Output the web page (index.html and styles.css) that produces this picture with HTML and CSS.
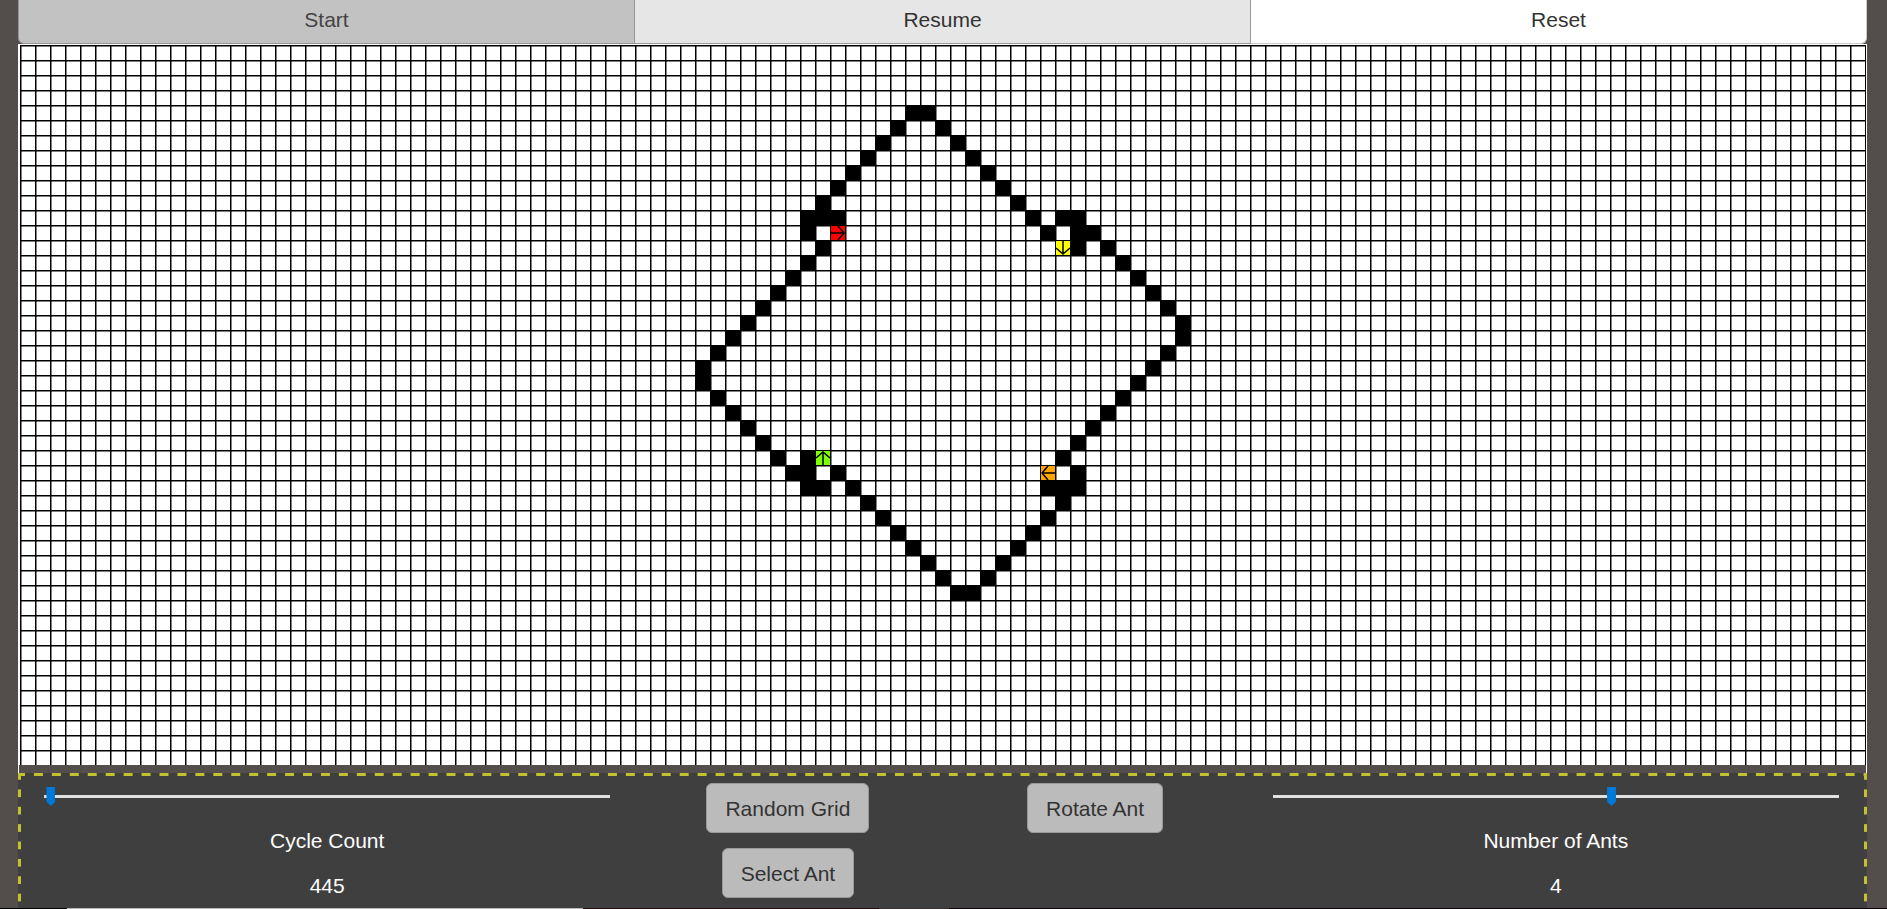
FILE: index.html
```html
<!DOCTYPE html>
<html lang="en">
<head>
<meta charset="utf-8">
<title>Langton's Ant</title>
<link rel="stylesheet" href="styles.css">
</head>
<body>
<main class="app">
  <div class="toolbar">
    <button class="tool tool-start" type="button">Start</button>
    <button class="tool tool-resume" type="button">Resume</button>
    <button class="tool tool-reset" type="button">Reset</button>
  </div>
  <div class="board">
    <canvas class="grid" id="grid" role="img" aria-label="Ant grid"></canvas>
  </div>
  <section class="panel">
    <div class="control">
      <input class="slider" id="cycles" type="range" min="0" max="100000" value="445">
      <label class="caption" for="cycles">Cycle Count</label>
      <output class="value" for="cycles">445</output>
    </div>
    <div class="actions">
      <button class="btn" type="button">Random Grid</button>
      <button class="btn" type="button">Select Ant</button>
    </div>
    <div class="actions">
      <button class="btn" type="button">Rotate Ant</button>
    </div>
    <div class="control">
      <input class="slider" id="ants" type="range" min="1" max="6" value="4">
      <label class="caption" for="ants">Number of Ants</label>
      <output class="value" for="ants">4</output>
    </div>
  </section>
</main>
<div class="edge"></div>
<script src="grid.js"></script>
</body>
</html>
```
FILE: styles.css
```css
* { box-sizing: border-box; }

body {
  margin: 0;
  height: 100vh;
  overflow: hidden;
  background: #534e4c;
  color: #fff;
  font: 21px/31px "Liberation Sans", Arial, sans-serif;
}

.app { margin: 0 20px 0 18px; }

.toolbar { display: flex; }

.tool {
  flex: 1;
  height: 44px;
  margin: 0;
  padding: 0 18px 4px;
  border: 1px solid #adadad;
  border-width: 0 1px 1px 0;
  color: #333;
  font: inherit;
}

.tool-start {
  background: #c2c2c2;
  border-color: #959595;
  border-left-width: 1px;
  border-bottom-left-radius: 6px;
  color: #444;
}

.tool-resume { background: #e6e6e6; border-color: #999; }

.tool-reset {
  background: #fff;
  border-color: #ccc;
  border-bottom-right-radius: 6px;
}

.board {
  padding-bottom: 8px;
  border: 1px solid #fff;
  border-bottom: 0;
}

.grid {
  display: block;
  width: 100%;
  height: 720px;
  background: #fff;
}

.panel {
  display: grid;
  grid-template-columns: 2fr 1fr 1fr 2fr;
  height: 139px;
  padding: 10px 4px 0 2px;
  background:
    linear-gradient(90deg, #c2c230 7px, transparent 7px 16px, #c2c230 16px) left top / 18px 3px round no-repeat,
    linear-gradient(#c2c230 7px, transparent 7px 16px, #c2c230 16px) left top / 3px 17px no-repeat round,
    linear-gradient(#c2c230 7px, transparent 7px 16px, #c2c230 16px) right top / 3px 17px no-repeat round,
    #3f3f3f;
}

.control {
  display: flex;
  flex-direction: column;
  align-items: center;
  gap: 14px;
  padding: 4px 24px 0;
}

.actions {
  display: flex;
  flex-direction: column;
  align-items: center;
  gap: 15px;
}

.btn {
  height: 50px;
  padding: 0 18px;
  border: 1px solid #999;
  border-radius: 6px;
  background: #bbb;
  color: #333;
  font: inherit;
}

.slider {
  appearance: none;
  width: 100%;
  height: 19px;
  margin: 0 0 5px;
  background: linear-gradient(#e0e0e0, #e0e0e0) center / 100% 3px no-repeat;
}

.slider::-webkit-slider-thumb {
  appearance: none;
  width: 9px;
  height: 19px;
  background: #0078d7;
  clip-path: polygon(0 0, 100% 0, 100% 78%, 50% 100%, 0 78%);
}

.edge {
  position: fixed;
  right: 0;
  bottom: 0;
  left: 0;
  height: 1px;
  background: linear-gradient(90deg, #000 67px, #b8b8b8 67px 583px, #2a0a08 583px 879px, #3c3030 879px 949px, #10000a 949px);
}
```
FILE: grid.js
```js
const CELL = 15;

// Filled columns of each row, starting at row 4, for a board 123 columns wide.
const FIRST_ROW = 4;
const BASE_CENTER = 61;
const FILLED = [
  [59, 60], [58, 61], [57, 62], [56, 63], [55, 64], [54, 65], [53, 66],
  [52, 53, 54, 67, 69, 70], [52, 68, 70, 71], [53, 70, 72], [52, 73],
  [51, 74], [50, 75], [49, 76], [48, 77], [47, 77], [46, 76], [45, 75],
  [45, 74], [46, 73], [47, 72], [48, 71], [49, 70], [50, 52, 69],
  [51, 52, 54, 70], [52, 53, 55, 68, 69, 70], [56, 69], [57, 68],
  [58, 67], [59, 66], [60, 65], [61, 64], [62, 63]
];

const ANTS = [
  { col: 54, row: 12, color: "#ff0000", turn: 1 },
  { col: 69, row: 13, color: "#ffff00", turn: 2 },
  { col: 53, row: 27, color: "#7fff00", turn: 0 },
  { col: 68, row: 28, color: "#ffa500", turn: 3 }
];

const canvas = document.getElementById("grid");

function drawAnt(ctx, ant, shift) {
  const x = (ant.col + shift) * CELL + 1;
  const y = ant.row * CELL;
  ctx.fillStyle = ant.color;
  ctx.fillRect(x + 1, y + 1, CELL - 1, CELL - 1);
  ctx.save();
  ctx.translate(x + 8, y + 8);
  ctx.rotate(ant.turn * Math.PI / 2);
  ctx.strokeStyle = "#000";
  ctx.lineWidth = 1.5;
  ctx.beginPath();
  ctx.moveTo(0, 7);
  ctx.lineTo(0, -6);
  ctx.moveTo(-7, 0);
  ctx.lineTo(0, -6);
  ctx.lineTo(7, 0);
  ctx.stroke();
  ctx.restore();
}

function draw() {
  const width = canvas.width = canvas.clientWidth;
  const height = canvas.height = canvas.clientHeight;
  const ctx = canvas.getContext("2d");
  const cols = Math.floor((width - 1) / CELL);
  const shift = Math.floor(cols / 2) - BASE_CENTER;

  for (let c = 0; c <= cols; c++) {
    ctx.fillStyle = "#000";
    ctx.fillRect(c * CELL + 1, 0, 1, height);
    ctx.fillStyle = "#808080";
    if (c < cols) ctx.fillRect(c * CELL + 2, 0, 1, height);
  }
  for (let y = 0; y < height; y += CELL) {
    ctx.fillStyle = "rgba(0, 0, 0, 0.5)";
    ctx.fillRect(1, y + 1, cols * CELL, 1);
    ctx.fillStyle = "#000";
    ctx.fillRect(1, y, cols * CELL, 1);
  }
  FILLED.forEach((row, i) => {
    for (const col of row) {
      ctx.fillRect((col + shift) * CELL + 1, (FIRST_ROW + i) * CELL, CELL + 1, CELL + 1);
    }
  });
  for (const ant of ANTS) drawAnt(ctx, ant, shift);
}

window.addEventListener("resize", draw);
draw();
```
